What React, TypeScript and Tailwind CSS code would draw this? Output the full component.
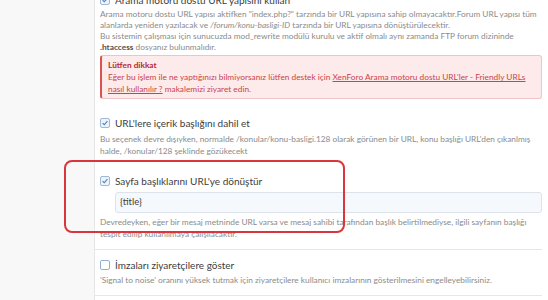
import React from "react";

const font = { fontFamily: 'Lato, "Open Sans", sans-serif' };

function CheckBox({ checked }: { checked: boolean }) {
  return (
    <span
      className={`flex h-[10px] w-[10px] shrink-0 items-center justify-center rounded-[2px] border ${
        checked ? "border-[#9fb8d6] bg-[#edf3fa]" : "border-[#8eb0d8] bg-white"
      }`}
    >
      {checked && (
        <svg viewBox="0 0 10 10" className="h-[8px] w-[8px]">
          <path d="M2 5.2 L4.1 7.2 L8 2.8" fill="none" stroke="#4b7dc0" strokeWidth="1.4" />
        </svg>
      )}
    </span>
  );
}

function Label({ checked, children }: { checked: boolean; children: React.ReactNode }) {
  return (
    <div className="flex h-[14px] items-center gap-[5px] text-[10px] text-[#3d3d3d]">
      <CheckBox checked={checked} />
      <span className="whitespace-nowrap">{children}</span>
    </div>
  );
}

function Desc({ lines }: { lines: React.ReactNode[] }) {
  return (
    <div className="text-[8.3px] leading-[11.5px] text-[#8b8b8b]">
      {lines.map((l, i) => (
        <div key={i} className="whitespace-nowrap">
          {l}
        </div>
      ))}
    </div>
  );
}

export default function App() {
  return (
    <div className="relative flex h-[300px] w-[548px] overflow-hidden bg-white" style={font}>
      {/* left rail */}
      <div className="w-[95px] shrink-0 border-r border-[#e6e6e6] bg-[#f8f8f8]" />

      {/* options column */}
      <div className="flex w-[447px] flex-col pl-[5px]">
        {/* search engine friendly urls */}
        <div className="-mt-[7px]">
          <Label checked>Arama motoru dostu URL yapısını kullan</Label>
          <div className="mt-[2px] text-[8.3px] leading-[11px] text-[#8b8b8b]">
            <div className="whitespace-nowrap">
              Arama motoru dostu URL yapısı aktifken "index.php?" tarzında bir URL yapısına sahip olmayacaktır.Forum URL yapısı tüm
            </div>
            <div className="whitespace-nowrap">
              alanlarda yeniden yazılacak ve <i>/forum/konu-basligi-ID</i> tarzında bir URL yapısına dönüştürülecektir.
            </div>
            <div className="whitespace-nowrap">
              Bu sistemin çalışması için sunucuzda mod_rewrite modülü kurulu ve aktif olmalı aynı zamanda FTP forum dizininde
            </div>
            <div className="whitespace-nowrap">
              <b className="text-[#505050]">.htaccess</b> dosyanız bulunmalıdır.
            </div>
          </div>
          <div className="mt-[2px] rounded-[3px] border border-[#f0c4c4] border-l-2 border-l-[#d9534f] bg-[#fdeaea] px-[6px] py-[3px] text-[8.3px] leading-[12px] text-[#c9444a]">
            <div className="font-bold text-[#b52b32]">Lütfen dikkat</div>
            <div className="whitespace-nowrap">
              Eğer bu işlem ile ne yaptığınızı bilmiyorsanız lütfen destek için{" "}
              <span className="underline">XenForo Arama motoru dostu URL'ler - Friendly URLs</span>
            </div>
            <div className="whitespace-nowrap">
              <span className="underline">nasıl kullanılır ?</span> makalemizi ziyaret edin.
            </div>
          </div>
        </div>

        {/* include content title */}
        <div className="mt-[17px]">
          <Label checked>URL'lere içerik başlığını dahil et</Label>
          <div className="mt-[4px]">
            <Desc
              lines={[
                "Bu seçenek devre dışıyken, normalde /konular/konu-basligi.128 olarak görünen bir URL, konu başlığı URL'den çıkanlmış",
                "halde, /konular/128 şeklinde gözükecekt",
              ]}
            />
          </div>
        </div>

        {/* unfurl urls */}
        <div className="mt-[17px]">
          <Label checked>Sayfa başlıklarını URL'ye dönüştür</Label>
          <div className="ml-[15px] mt-[4px] flex h-[21px] items-center rounded-[3px] border border-[#dde3ea] bg-[#f5f8fc] px-[4px] text-[9.5px] text-[#3d3d3d]">
            {"{title}"}
          </div>
          <div className="mt-[4px]">
            <Desc
              lines={[
                "Devredeyken, eğer bir mesaj metninde URL varsa ve mesaj sahibi tarafından başlık belirtilmediyse, ilgili sayfanın başlığı",
                "tespit edilip kullanılmaya çalışılacaktır.",
              ]}
            />
          </div>
        </div>

        <div className="ml-[-5px] mt-[9px] h-px bg-[#e7e7e7]" />

        {/* signatures */}
        <div className="mt-[8px]">
          <Label checked={false}>İmzaları ziyaretçilere göster</Label>
          <div className="mt-[3px]">
            <Desc
              lines={[
                "'Signal to noise' oranını yüksek tutmak için ziyaretçilere kullanıcı imzalarının gösterilmesini engelleyebilirsiniz.",
              ]}
            />
          </div>
        </div>

        <div className="ml-[-5px] mt-[8px] h-px bg-[#e7e7e7]" />
      </div>

      {/* highlight annotation */}
      <div className="pointer-events-none absolute left-[64px] top-[160px] h-[73px] w-[281px] rounded-[8px] border-2 border-[#d8363c]" />
    </div>
  );
}
